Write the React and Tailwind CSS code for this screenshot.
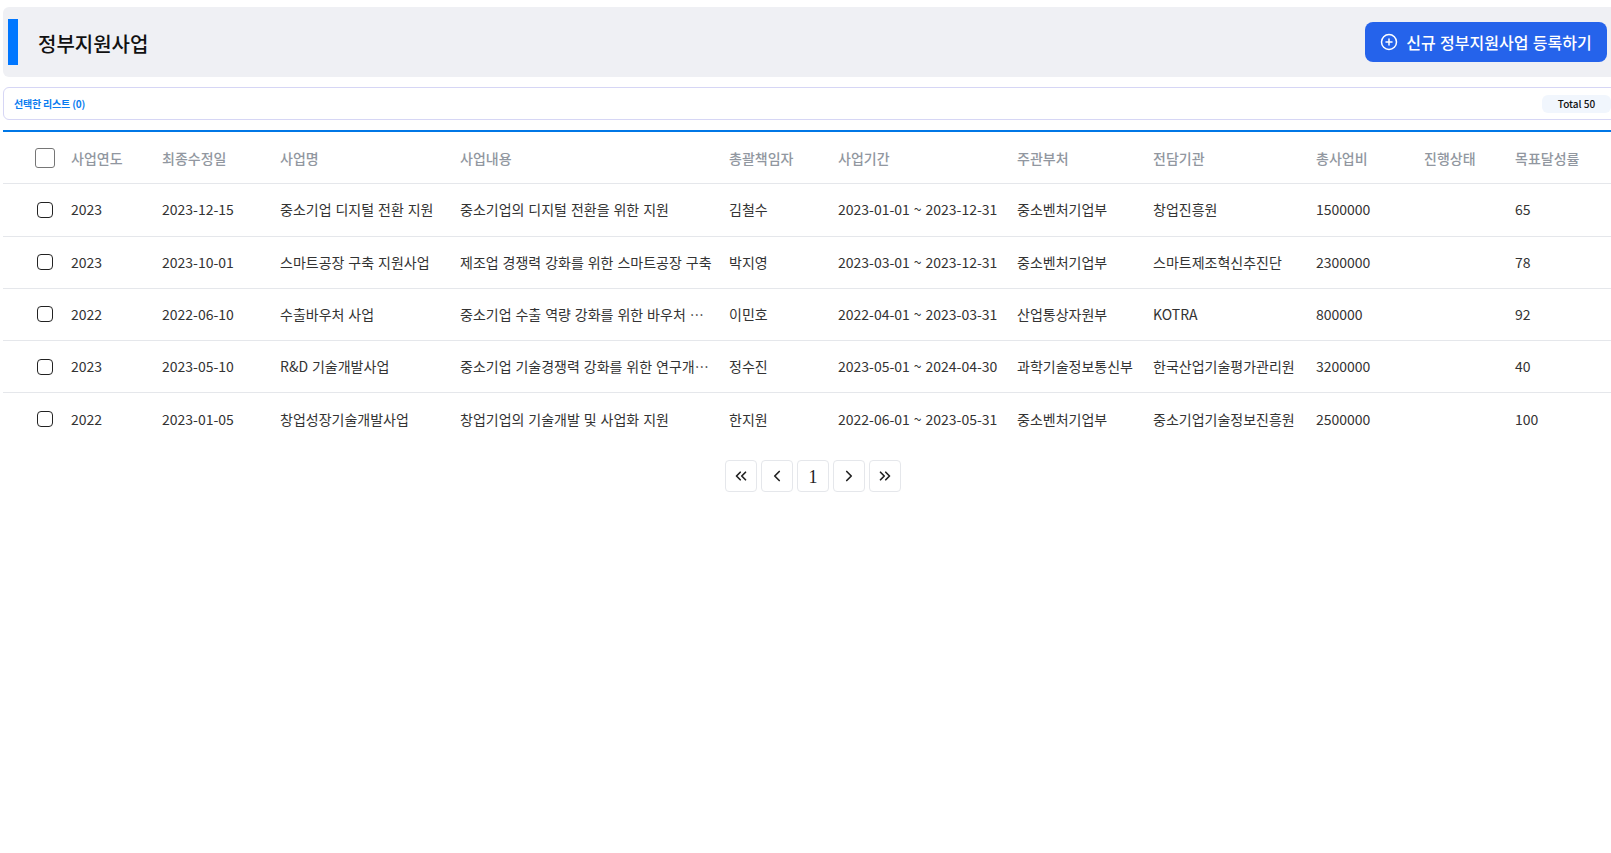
import React from 'react';
import { ChevronLeft, ChevronRight, ChevronsLeft, ChevronsRight, CirclePlus } from 'lucide-react';

const columns = [
  { label: '사업연도', width: 'w-[91px]' },
  { label: '최종수정일', width: 'w-[118px]' },
  { label: '사업명', width: 'w-[180px]' },
  { label: '사업내용', width: 'w-[269px]' },
  { label: '총괄책임자', width: 'w-[109px]' },
  { label: '사업기간', width: 'w-[179px]' },
  { label: '주관부처', width: 'w-[136px]' },
  { label: '전담기관', width: 'w-[163px]' },
  { label: '총사업비', width: 'w-[108px]' },
  { label: '진행상태', width: 'w-[91px]' },
  { label: '목표달성률', width: 'w-[118px]' },
];

const rows = [
  ['2023', '2023-12-15', '중소기업 디지털 전환 지원', '중소기업의 디지털 전환을 위한 지원', '김철수', '2023-01-01 ~ 2023-12-31', '중소벤처기업부', '창업진흥원', '1500000', '', '65'],
  ['2023', '2023-10-01', '스마트공장 구축 지원사업', '제조업 경쟁력 강화를 위한 스마트공장 구축', '박지영', '2023-03-01 ~ 2023-12-31', '중소벤처기업부', '스마트제조혁신추진단', '2300000', '', '78'],
  ['2022', '2022-06-10', '수출바우처 사업', '중소기업 수출 역량 강화를 위한 바우처 지원 사업', '이민호', '2022-04-01 ~ 2023-03-31', '산업통상자원부', 'KOTRA', '800000', '', '92'],
  ['2023', '2023-05-10', 'R&D 기술개발사업', '중소기업 기술경쟁력 강화를 위한 연구개발 지원', '정수진', '2023-05-01 ~ 2024-04-30', '과학기술정보통신부', '한국산업기술평가관리원', '3200000', '', '40'],
  ['2022', '2023-01-05', '창업성장기술개발사업', '창업기업의 기술개발 및 사업화 지원', '한지원', '2022-06-01 ~ 2023-05-31', '중소벤처기업부', '중소기업기술정보진흥원', '2500000', '', '100'],
];

const pageButton = 'flex h-8 w-8 items-center justify-center rounded border border-[#e5e7eb] bg-white text-[#222]';

export default function App() {
  return (
    <div className="h-[853px] w-full overflow-hidden bg-white font-['Noto_Sans_CJK_KR','Noto_Sans',sans-serif]">
      <div className="ml-[3px] w-[1620px] pt-[7px]">
        <div className="flex h-[70px] items-center justify-between rounded-md bg-[#eff0f4] pl-[5px] pr-[16px]">
          <div className="flex items-center">
            <div className="h-[46px] w-[10px] bg-[#0077ff]" />
            <h1 className="ml-[20px] pt-[3px] text-[20px] font-medium text-[#111]">정부지원사업</h1>
          </div>
          <button className="flex h-10 w-[242px] items-center justify-center gap-2 rounded-lg bg-[#2563eb] text-[16px] font-medium text-white [word-spacing:0.8px]">
            <CirclePlus size={18} strokeWidth={2} />
            신규 정부지원사업 등록하기
          </button>
        </div>

        <div className="mt-[10px] flex h-[33px] items-center justify-between rounded-md border border-[#d6d6f5] pl-[10px] pr-[11px]">
          <span className="text-[10px] font-bold tracking-[-0.2px] text-[#0a7cf0]">선택한 리스트 (0)</span>
          <span className="flex h-[18px] w-[69px] items-center justify-center rounded-md bg-[#f1f6fd] text-[10px] font-medium text-[#111]">Total 50</span>
        </div>

        <div className="mt-[10px] border-t-2 border-[#0077e6]">
          <table className="w-[1620px] table-fixed border-collapse text-left text-[14px] [word-spacing:0.8px]">
            <thead>
              <tr className="h-[51px] border-b border-[#e5e7eb]">
                <th className="w-[58px] pl-[32px] pt-[2px]">
                  <input type="checkbox" className="block h-5 w-5 appearance-none rounded-[3px] border border-[#767676] bg-white" />
                </th>
                {columns.map((col) => (
                  <th key={col.label} className={`${col.width} px-[10px] pt-[2px] font-medium text-[#9197a0]`}>{col.label}</th>
                ))}
              </tr>
            </thead>
            <tbody>
              {rows.map((row, i) => (
                <tr key={i} className={`${i === 0 ? 'h-[53px]' : 'h-[52.25px]'} ${i < rows.length - 1 ? 'border-b border-[#e5e7eb]' : ''}`}>
                  <td className="pl-[34px]">
                    <input type="checkbox" className="block h-4 w-4 appearance-none rounded-[4px] border border-[#222] bg-white" />
                  </td>
                  {row.map((cell, j) => (
                    <td key={j} className={`truncate pl-[10px] text-[#333] ${j === 3 ? 'pr-[7px]' : j === 5 ? 'pr-[2px]' : 'pr-[10px]'}`}>{cell}</td>
                  ))}
                </tr>
              ))}
            </tbody>
          </table>
        </div>

        <div className="mt-[15px] flex justify-center gap-1">
          <button className={pageButton}><ChevronsLeft size={18} strokeWidth={2.25} /></button>
          <button className={pageButton}><ChevronLeft size={18} strokeWidth={2.25} /></button>
          <button className={`${pageButton} pt-[2px] font-['Liberation_Serif',serif] text-[18px]`}>1</button>
          <button className={pageButton}><ChevronRight size={18} strokeWidth={2.25} /></button>
          <button className={pageButton}><ChevronsRight size={18} strokeWidth={2.25} /></button>
        </div>
      </div>
    </div>
  );
}
